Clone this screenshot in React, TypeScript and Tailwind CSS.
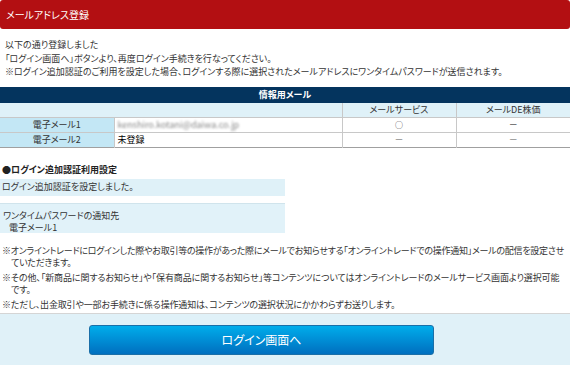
import React from "react";

const font = { fontFamily: '"MS PGothic", "Noto Sans CJK JP", sans-serif' };

const notes = [
  { text: "※オンライントレードにログインした際やお取引等の操作があった際にメールでお知らせする「オンライントレードでの操作通知」メールの配信を設定させていただきます。", cls: "tracking-[-0.25px]" },
  { text: "※その他、「新商品に関するお知らせ」や「保有商品に関するお知らせ」等コンテンツについてはオンライントレードのメールサービス画面より選択可能です。", cls: "tracking-[-0.1px] pr-[1px]" },
  { text: "※ただし、出金取引や一部お手続きに係る操作通知は、コンテンツの選択状況にかかわらずお送りします。", cls: "tracking-[-0.15px]" },
];

const App: React.FC = () => {
  return (
    <div
      className="w-[570px] h-[365px] bg-white text-[#333] text-[9px] leading-[13.5px] overflow-hidden [font-feature-settings:'palt']"
      style={font}
    >
      <div className="h-[29px] bg-[#b30f12] rounded-[3px] flex items-center px-[6px] text-white text-[10px]">
        メールアドレス登録
      </div>

      <div className="pt-[9px] px-[5px]">
        <p>以下の通り登録しました</p>
        <p>「ログイン画面へ」ボタンより、再度ログイン手続きを行なってください。</p>
        <p>※ログイン追加認証のご利用を設定した場合、ログインする際に選択されたメールアドレスにワンタイムパスワードが送信されます。</p>
      </div>

      <table className="mt-[8px] w-full border-collapse table-fixed border-b border-[#a0a0a0]">
        <colgroup>
          <col className="w-[114px]" />
          <col className="w-[228px]" />
          <col className="w-[114px]" />
          <col />
        </colgroup>
        <thead>
          <tr className="h-[16px] bg-[#04345e] text-white">
            <th colSpan={4} className="text-center font-bold leading-[13px]">情報用メール</th>
          </tr>
          <tr className="h-[15px] bg-[#dff1f8]">
            <th colSpan={2} className="border-b border-[#c8c8c8]"></th>
            <th className="font-normal text-center border-l border-b border-[#c8c8c8]">メールサービス</th>
            <th className="font-normal text-center border-l border-b border-[#c8c8c8]">メールDE株価</th>
          </tr>
        </thead>
        <tbody>
          <tr className="h-[15px]">
            <td className="bg-[#c3e7f5] text-center border-b border-[#c8c8c8]">電子メール1</td>
            <td className="px-[3px] border-l border-b border-[#c8c8c8]">
              <span className="blur-[1.2px] text-[#888]">kenshiro.kotani@daiwa.co.jp</span>
            </td>
            <td className="text-center border-l border-b border-[#c8c8c8] text-[8px]">○</td>
            <td className="text-center border-l border-b border-[#c8c8c8]">－</td>
          </tr>
          <tr className="h-[15px]">
            <td className="bg-[#c3e7f5] text-center">電子メール2</td>
            <td className="px-[3px] border-l border-[#c8c8c8] text-black">未登録</td>
            <td className="text-center border-l border-[#c8c8c8] text-[#777]">－</td>
            <td className="text-center border-l border-[#c8c8c8] text-[#777]">－</td>
          </tr>
        </tbody>
      </table>

      <p className="mt-[15px] px-[2px] font-bold text-[#222]">●ログイン追加認証利用設定</p>

      <div className="mt-[2px] w-[285px] h-[17px] bg-[#dff1f8] flex items-center px-[2px]">
        ログイン追加認証を設定しました。
      </div>

      <div className="mt-[7px] w-[285px] h-[30px] bg-[#e1f2f9] border-t border-[#d0e4ec] px-[3px] pt-[6px] leading-[12px]">
        <p>ワンタイムパスワードの通知先</p>
        <p className="pl-[6px]">電子メール1</p>
      </div>

      <div className="mt-[12px] px-[2px] leading-[12.5px]">
        {notes.map((n) => (
          <p key={n.text} className={`pl-[1em] -indent-[1em] mb-[2px] ${n.cls}`}>
            {n.text}
          </p>
        ))}
      </div>

      <div className="mt-[1px] h-[60px] bg-[#e0f1f8] border-t border-[#d5d5d5] pt-[11px] flex">
        <button
          className="ml-[89px] w-[345px] h-[30px] rounded-[3px] bg-gradient-to-b from-[#00adeb] to-[#006fbf] text-white text-[12px] border border-[#1a6fa8]"
          style={font}
        >
          ログイン画面へ
        </button>
      </div>
    </div>
  );
};

export default App;
